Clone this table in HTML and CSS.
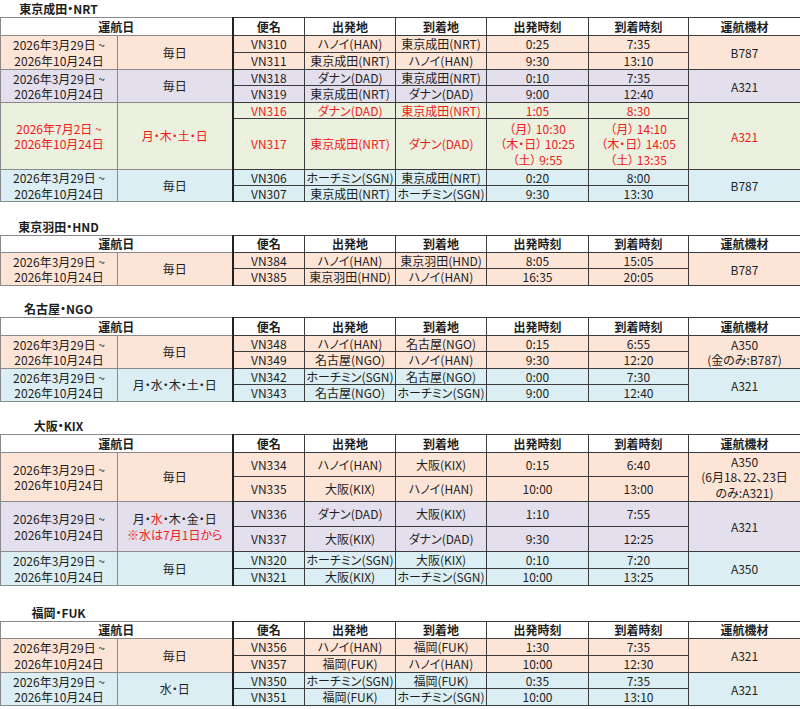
FILE: index.html
```html
<!DOCTYPE html>
<html lang="ja">
<head>
<meta charset="utf-8">
<title>運航スケジュール</title>
<link rel="stylesheet" href="styles.css">
</head>
<body>

<section class="route">
  <div class="route-title">東京成田・NRT</div>
  <table class="sched">
    <colgroup><col class="c-date"><col class="c-days"><col class="c-fl"><col class="c-ap"><col class="c-ap"><col class="c-dep"><col class="c-arr"><col class="c-eq"></colgroup>
    <tr class="head"><th colspan="2" class="d">運航日</th><th class="fl">便名</th><th>出発地</th><th>到着地</th><th>出発時刻</th><th>到着時刻</th><th>運航機材</th></tr>
    <tr class="peach"><td rowspan="2" class="d">2026年3月29日 ~<br>2026年10月24日</td><td rowspan="2" class="d">毎日</td><td class="fl">VN310</td><td>ハノイ(HAN)</td><td>東京成田(NRT)</td><td>0:25</td><td>7:35</td><td rowspan="2">B787</td></tr>
    <tr class="peach"><td class="fl">VN311</td><td>東京成田(NRT)</td><td>ハノイ(HAN)</td><td>9:30</td><td>13:10</td></tr>
    <tr class="lav s"><td rowspan="2" class="d">2026年3月29日 ~<br>2026年10月24日</td><td rowspan="2" class="d">毎日</td><td class="fl">VN318</td><td>ダナン(DAD)</td><td>東京成田(NRT)</td><td>0:10</td><td>7:35</td><td rowspan="2">A321</td></tr>
    <tr class="lav"><td class="fl">VN319</td><td>東京成田(NRT)</td><td>ダナン(DAD)</td><td>9:00</td><td>12:40</td></tr>
    <tr class="green red s"><td rowspan="2" class="d">2026年7月2日 ~<br>2026年10月24日</td><td rowspan="2" class="d">月・木・土・日</td><td class="fl">VN316</td><td>ダナン(DAD)</td><td>東京成田(NRT)</td><td>1:05</td><td>8:30</td><td rowspan="2">A321</td></tr>
    <tr class="green red tall3"><td class="fl">VN317</td><td>東京成田(NRT)</td><td>ダナン(DAD)</td><td>（月） 10:30<br>（木・日） 10:25<br>（土） 9:55</td><td>（月） 14:10<br>（木・日） 14:05<br>（土） 13:35</td></tr>
    <tr class="blue s"><td rowspan="2" class="d">2026年3月29日 ~<br>2026年10月24日</td><td rowspan="2" class="d">毎日</td><td class="fl">VN306</td><td>ホーチミン(SGN)</td><td>東京成田(NRT)</td><td>0:20</td><td>8:00</td><td rowspan="2">B787</td></tr>
    <tr class="blue s"><td class="fl">VN307</td><td>東京成田(NRT)</td><td>ホーチミン(SGN)</td><td>9:30</td><td>13:30</td></tr>
  </table>
</section>

<section class="route gap-16">
  <div class="route-title">東京羽田・HND</div>
  <table class="sched">
    <colgroup><col class="c-date"><col class="c-days"><col class="c-fl"><col class="c-ap"><col class="c-ap"><col class="c-dep"><col class="c-arr"><col class="c-eq"></colgroup>
    <tr class="head hs"><th colspan="2" class="d">運航日</th><th class="fl">便名</th><th>出発地</th><th>到着地</th><th>出発時刻</th><th>到着時刻</th><th>運航機材</th></tr>
    <tr class="peach s"><td rowspan="2" class="d">2026年3月29日 ~<br>2026年10月24日</td><td rowspan="2" class="d">毎日</td><td class="fl">VN384</td><td>ハノイ(HAN)</td><td>東京羽田(HND)</td><td>8:05</td><td>15:05</td><td rowspan="2">B787</td></tr>
    <tr class="peach"><td class="fl">VN385</td><td>東京羽田(HND)</td><td>ハノイ(HAN)</td><td>16:35</td><td>20:05</td></tr>
  </table>
</section>

<section class="route gap-14">
  <div class="route-title">名古屋・NGO</div>
  <table class="sched">
    <colgroup><col class="c-date"><col class="c-days"><col class="c-fl"><col class="c-ap"><col class="c-ap"><col class="c-dep"><col class="c-arr"><col class="c-eq"></colgroup>
    <tr class="head"><th colspan="2" class="d">運航日</th><th class="fl">便名</th><th>出発地</th><th>到着地</th><th>出発時刻</th><th>到着時刻</th><th>運航機材</th></tr>
    <tr class="peach s"><td rowspan="2" class="d">2026年3月29日 ~<br>2026年10月24日</td><td rowspan="2" class="d">毎日</td><td class="fl">VN348</td><td>ハノイ(HAN)</td><td>名古屋(NGO)</td><td>0:15</td><td>6:55</td><td rowspan="2" class="multi">A350<br>(金のみ:B787)</td></tr>
    <tr class="peach"><td class="fl">VN349</td><td>名古屋(NGO)</td><td>ハノイ(HAN)</td><td>9:30</td><td>12:20</td></tr>
    <tr class="blue s"><td rowspan="2" class="d">2026年3月29日 ~<br>2026年10月24日</td><td rowspan="2" class="d">月・水・木・土・日</td><td class="fl">VN342</td><td>ホーチミン(SGN)</td><td>名古屋(NGO)</td><td>0:00</td><td>7:30</td><td rowspan="2">A321</td></tr>
    <tr class="blue"><td class="fl">VN343</td><td>名古屋(NGO)</td><td>ホーチミン(SGN)</td><td>9:00</td><td>12:40</td></tr>
  </table>
</section>

<section class="route gap-15">
  <div class="route-title">大阪・KIX</div>
  <table class="sched">
    <colgroup><col class="c-date"><col class="c-days"><col class="c-fl"><col class="c-ap"><col class="c-ap"><col class="c-dep"><col class="c-arr"><col class="c-eq"></colgroup>
    <tr class="head"><th colspan="2" class="d">運航日</th><th class="fl">便名</th><th>出発地</th><th>到着地</th><th>出発時刻</th><th>到着時刻</th><th>運航機材</th></tr>
    <tr class="peach tall-s"><td rowspan="2" class="d">2026年3月29日 ~<br>2026年10月24日</td><td rowspan="2" class="d">毎日</td><td class="fl">VN334</td><td>ハノイ(HAN)</td><td>大阪(KIX)</td><td>0:15</td><td>6:40</td><td rowspan="2" class="multi">A350<br>(6月18、22、23日<br>のみ:A321)</td></tr>
    <tr class="peach tall"><td class="fl">VN335</td><td>大阪(KIX)</td><td>ハノイ(HAN)</td><td>10:00</td><td>13:00</td></tr>
    <tr class="lav tall"><td rowspan="2" class="d">2026年3月29日 ~<br>2026年10月24日</td><td rowspan="2" class="d">月・<span class="hl">水</span>・木・金・日<br><span class="hl">※水は7月1日から</span></td><td class="fl">VN336</td><td>ダナン(DAD)</td><td>大阪(KIX)</td><td>1:10</td><td>7:55</td><td rowspan="2">A321</td></tr>
    <tr class="lav tall"><td class="fl">VN337</td><td>大阪(KIX)</td><td>ダナン(DAD)</td><td>9:30</td><td>12:25</td></tr>
    <tr class="blue"><td rowspan="2" class="d">2026年3月29日 ~<br>2026年10月24日</td><td rowspan="2" class="d">毎日</td><td class="fl">VN320</td><td>ホーチミン(SGN)</td><td>大阪(KIX)</td><td>0:10</td><td>7:20</td><td rowspan="2">A350</td></tr>
    <tr class="blue"><td class="fl">VN321</td><td>大阪(KIX)</td><td>ホーチミン(SGN)</td><td>10:00</td><td>13:25</td></tr>
  </table>
</section>

<section class="route gap-18">
  <div class="route-title">福岡・FUK</div>
  <table class="sched">
    <colgroup><col class="c-date"><col class="c-days"><col class="c-fl"><col class="c-ap"><col class="c-ap"><col class="c-dep"><col class="c-arr"><col class="c-eq"></colgroup>
    <tr class="head hs"><th colspan="2" class="d">運航日</th><th class="fl">便名</th><th>出発地</th><th>到着地</th><th>出発時刻</th><th>到着時刻</th><th>運航機材</th></tr>
    <tr class="peach"><td rowspan="2" class="d">2026年3月29日 ~<br>2026年10月24日</td><td rowspan="2" class="d">毎日</td><td class="fl">VN356</td><td>ハノイ(HAN)</td><td>福岡(FUK)</td><td>1:30</td><td>7:35</td><td rowspan="2">A321</td></tr>
    <tr class="peach"><td class="fl">VN357</td><td>福岡(FUK)</td><td>ハノイ(HAN)</td><td>10:00</td><td>12:30</td></tr>
    <tr class="blue s"><td rowspan="2" class="d">2026年3月29日 ~<br>2026年10月24日</td><td rowspan="2" class="d">水・日</td><td class="fl">VN350</td><td>ホーチミン(SGN)</td><td>福岡(FUK)</td><td>0:35</td><td>7:35</td><td rowspan="2">A321</td></tr>
    <tr class="blue"><td class="fl">VN351</td><td>福岡(FUK)</td><td>ホーチミン(SGN)</td><td>10:00</td><td>13:10</td></tr>
  </table>
</section>

</body>
</html>
```

FILE: styles.css
```css
html, body {
  margin: 0;
  padding: 0;
  background: #fff;
}

body {
  font-family: "Noto Sans CJK JP", "Noto Sans", sans-serif;
  font-size: 12px;
  color: #1e1e1e;
  font-feature-settings: "palt";
}

.gap-14 { margin-top: 14px; }
.gap-15 { margin-top: 15px; }
.gap-16 { margin-top: 16px; }
.gap-18 { margin-top: 18px; }

.route-title {
  width: 117px;
  height: 17px;
  line-height: 17px;
  text-align: center;
  font-weight: bold;
}

.sched {
  border-collapse: collapse;
  table-layout: fixed;
  width: 800px;
}

.c-date { width: 117px; }
.c-days { width: 115px; }
.c-fl   { width: 72px; }
.c-ap   { width: 91px; }
.c-dep  { width: 102px; }
.c-arr  { width: 100px; }
.c-eq   { width: 112px; }

.sched th,
.sched td {
  border: 1px solid #3c3c3c;
  padding: 0;
  height: 16px;
  line-height: 16px;
  text-align: center;
  vertical-align: middle;
  white-space: nowrap;
  overflow: hidden;
}

.sched th {
  height: 17px;
  line-height: 17px;
  font-weight: bold;
  background: #fff;
}

.sched .hs th {
  height: 16px;
  line-height: 16px;
}

.sched .s td {
  height: 15px;
  line-height: 15px;
}

.sched td.d,
.sched td.multi {
  line-height: 15.5px;
}

.sched td.d,
.sched th.d {
  border-color: #8a8a8a;
}

.sched .fl {
  border-left: 2px solid #222;
}

.peach td { background: #fce4d6; }
.lav td   { background: #e4dfec; }
.green td { background: #ebf1de; }
.blue td  { background: #daeef3; }

.red td { color: #f01a1a; }
.hl { color: #f01a1a; }

.sched .tall td { height: 24px; }
.sched .tall-s td { height: 23px; }
.sched .tall3 td { height: 50px; line-height: 15.5px; }
```
